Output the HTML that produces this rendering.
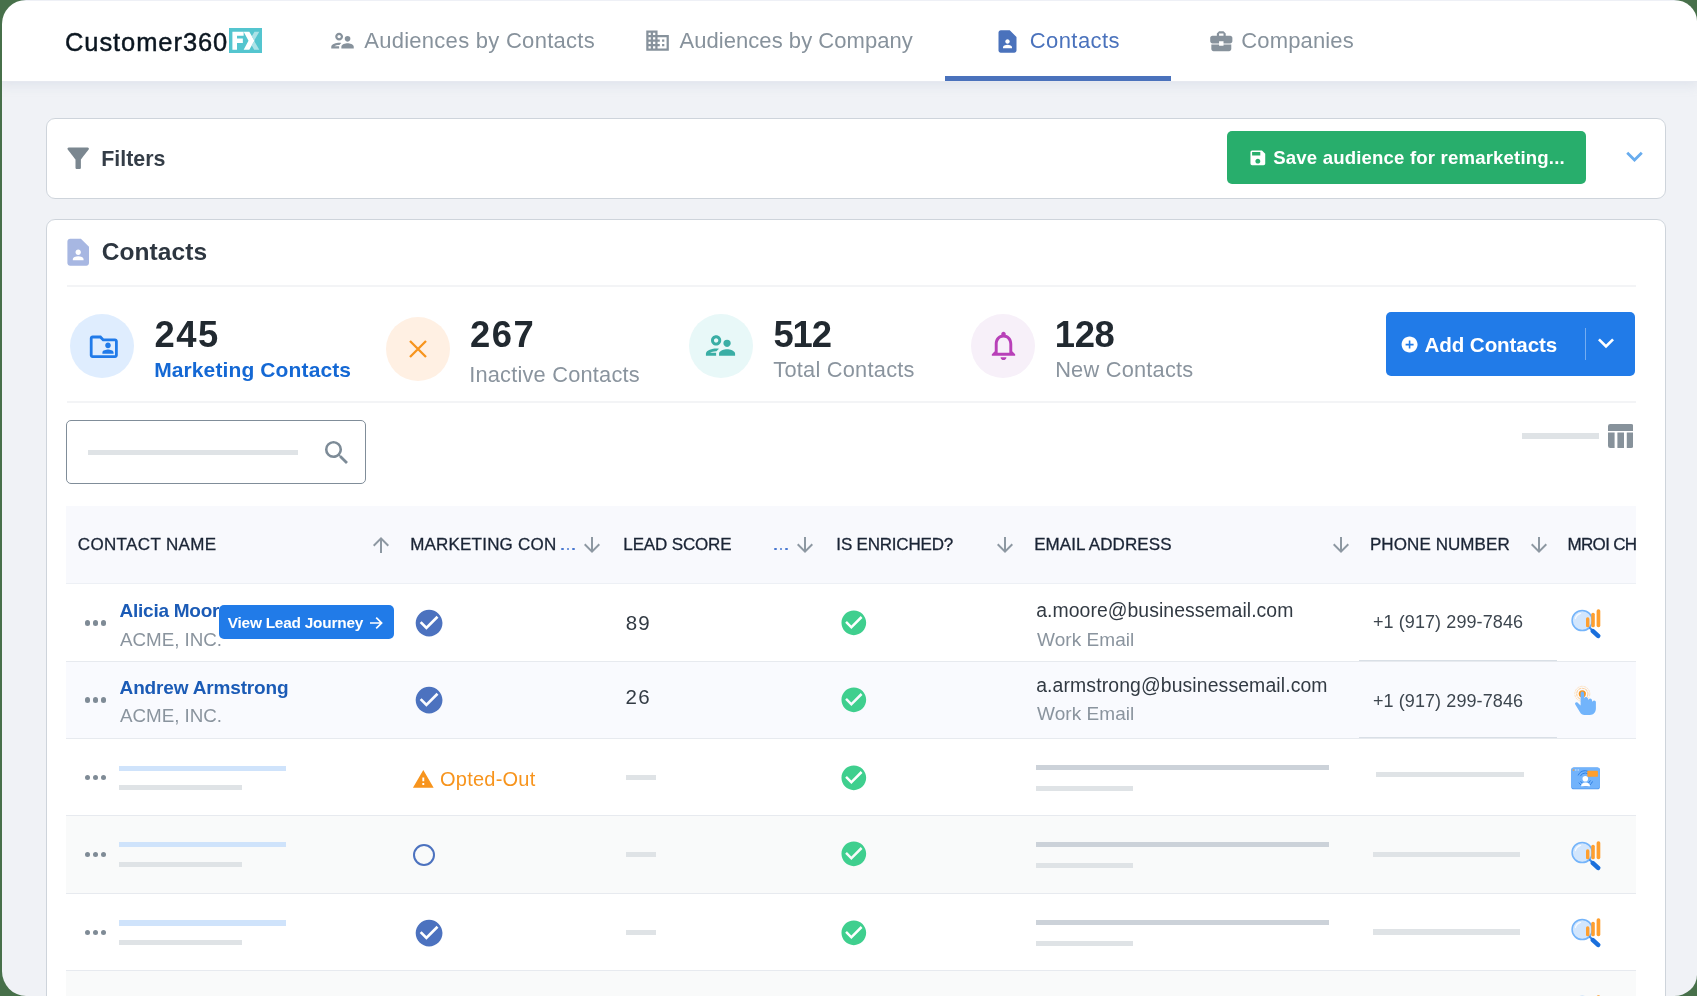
<!DOCTYPE html>
<html>
<head>
<meta charset="utf-8">
<title>Customer360FX - Contacts</title>
<style>
*{box-sizing:border-box;margin:0;padding:0}
html,body{width:1697px;height:996px;overflow:hidden;background:#f0f2f6;font-family:"Liberation Sans",sans-serif}
#app{position:absolute;left:0;top:0;width:1697px;height:996px;overflow:hidden;will-change:transform}
.a{position:absolute;display:block}
.t{position:absolute;white-space:nowrap;line-height:1}
</style>
</head>
<body>
<div id="app">
<div class="a" style="left:0.00px;top:0.00px;width:1697.00px;height:80.50px;background:#fff;box-shadow:0 1px 0 #e6e9f0,0 2px 12px 1px rgba(150,162,190,.22);"></div>
<div class="a" style="left:0.00px;top:0.00px;width:1697.00px;height:1.00px;background:#eef0f6;"></div>
<div class="t" style="left:65.02px;top:30px;font-size:25.5px;color:#0b1620;letter-spacing:0.917px;-webkit-text-stroke:.45px #0b1620;">Customer360</div>
<div class="a" style="left:229.40px;top:28.20px;width:32.60px;height:24.60px;background:#54c5cf;"></div>
<svg class="a" style="left:229.4px;top:28.2px" width="32.6" height="24.6" viewBox="0 0 32.6 24.6"><path d="M3.4 3.8h11.25v4H8v2.8h5.85v4.3H8v6.8H3.4z" fill="#fff"/><path d="M14.65 3.8h5.65l5.2 8.85-5.2 9.05h-5.65l4.85-9.05z" fill="#fff"/><path d="M25.5 3.8h4.8l-5.1 8.6-2.4-4.2zM25.2 13l5.1 8.700h-5.1l-2.600-4.400z" fill="#ace2e7"/></svg>
<svg class="a" style="left:328.70px;top:26.60px;" width="27" height="27" viewBox="0 0 24 24"><path fill="#87929c" d="M9 12c1.93 0 3.5-1.57 3.5-3.5S10.93 5 9 5 5.5 6.57 5.5 8.5 7.07 12 9 12zm0-5c.83 0 1.5.67 1.5 1.5S9.83 10 9 10s-1.5-.67-1.5-1.5S8.17 7 9 7zm.05 10H4.77c.99-.5 2.7-1 4.23-1 .11 0 .23.01.34.01.34-.73.93-1.33 1.64-1.81-.73-.13-1.42-.2-1.98-.2-2.34 0-7 1.17-7 3.5V19h7v-1.5c0-.17.02-.34.05-.5zm7.45-2.5c-1.84 0-5.5 1.01-5.5 3V19h11v-1.5c0-1.99-3.66-3-5.5-3zm1.21-1.82c.76-.43 1.29-1.24 1.29-2.18a2.5 2.5 0 0 0-5 0c0 .94.53 1.75 1.29 2.18.36.2.77.32 1.21.32s.85-.12 1.21-.32z"/></svg>
<div class="t" style="left:364.20px;top:30px;font-size:22px;color:#87929c;letter-spacing:0.275px;">Audiences by Contacts</div>
<svg class="a" style="left:644.00px;top:27.20px;" width="27.1" height="27.1" viewBox="0 0 24 24"><path fill="#87929c" d="M12 7V3H2v18h20V7H12zM6 19H4v-2h2v2zm0-4H4v-2h2v2zm0-4H4V9h2v2zm0-4H4V5h2v2zm4 12H8v-2h2v2zm0-4H8v-2h2v2zm0-4H8V9h2v2zm0-4H8V5h2v2zm10 12h-8v-2h2v-2h-2v-2h2v-2h-2V9h8v10zm-2-8h-2v2h2v-2zm0 4h-2v2h2v-2z"/></svg>
<div class="t" style="left:679.50px;top:30px;font-size:22px;color:#87929c;letter-spacing:0.052px;">Audiences by Company</div>
<svg class="a" style="left:994.20px;top:27.50px;" width="27" height="27" viewBox="0 0 24 24"><path fill="#4a72bc" d="M14 2H6c-1.1 0-2 .9-2 2v16c0 1.1.9 2 2 2h12c1.1 0 2-.9 2-2V8l-6-6zm-2 8c1.1 0 2 .9 2 2s-.9 2-2 2-2-.9-2-2 .9-2 2-2zm4 8H8v-.57c0-.81.48-1.53 1.22-1.85a6.95 6.95 0 0 1 5.56 0A2.01 2.01 0 0 1 16 17.43V18z"/></svg>
<div class="t" style="left:1029.70px;top:30px;font-size:22px;color:#4a72bc;letter-spacing:0.440px;">Contacts</div>
<svg class="a" style="left:1207.50px;top:27.70px;" width="26.6" height="26.6" viewBox="0 0 24 24"><path fill="#87929c" d="M10 16v-1H3.01L3 19c0 1.11.89 2 2 2h14c1.11 0 2-.89 2-2v-4h-7v1h-4zm10-9h-4.01V5l-2-2h-4l-2 2v2H4c-1.1 0-2 .9-2 2v3c0 1.11.89 2 2 2h6v-2h4v2h6c1.1 0 2-.9 2-2V9c0-1.1-.9-2-2-2zm-6 0h-4V5h4v2z"/></svg>
<div class="t" style="left:1241.30px;top:30px;font-size:22px;color:#87929c;letter-spacing:0.144px;">Companies</div>
<div class="a" style="left:945.00px;top:76.00px;width:225.50px;height:4.60px;background:#4a72bc;"></div>
<div class="a" style="left:46.00px;top:117.50px;width:1620.00px;height:81.00px;background:#fff;border:1.3px solid #ced4db;border-radius:9px;"></div>
<svg class="a" style="left:61.60px;top:141.70px;" width="32.4" height="32.4" viewBox="0 0 24 24"><path fill="#7b8790" d="M4.25 5.61C6.27 8.2 10 13 10 13v6c0 .55.45 1 1 1h2c.55 0 1-.45 1-1v-6s3.72-4.8 5.74-7.39A.998.998 0 0 0 18.95 4H5.04c-.83 0-1.3.95-.79 1.61z"/></svg>
<div class="t" style="left:101.31px;top:149px;font-size:21.4px;color:#343d47;font-weight:bold;letter-spacing:-0.010px;">Filters</div>
<div class="a" style="left:1227.00px;top:131.40px;width:359.00px;height:53.00px;background:#28ae6c;border-radius:5px;"></div>
<svg class="a" style="left:1248.10px;top:148.40px;" width="19.7" height="19.7" viewBox="0 0 24 24"><path fill="#fff" d="M17 3H5a2 2 0 0 0-2 2v14a2 2 0 0 0 2 2h14c1.1 0 2-.9 2-2V7l-4-4zm-5 16c-1.66 0-3-1.34-3-3s1.34-3 3-3 3 1.34 3 3-1.34 3-3 3zm3-10H5V5h10v4z"/></svg>
<div class="t" style="left:1273.24px;top:149px;font-size:18.6px;color:#fff;font-weight:bold;letter-spacing:0.168px;">Save audience for remarketing...</div>
<svg class="a" style="left:1617.50px;top:140.30px;" width="33" height="33" viewBox="0 0 24 24"><path fill="#68acee" d="M16.59 8.59L12 13.17 7.41 8.59 6 10l6 6 6-6z"/></svg>
<div class="a" style="left:46.00px;top:219.30px;width:1620.00px;height:800.00px;background:#fff;border:1.3px solid #ced4db;border-radius:9px;"></div>
<svg class="a" style="left:61.60px;top:236.00px;" width="32.4" height="32.4" viewBox="0 0 24 24"><path fill="#a7b7e2" d="M14 2H6c-1.1 0-2 .9-2 2v16c0 1.1.9 2 2 2h12c1.1 0 2-.9 2-2V8l-6-6zm-2 8c1.1 0 2 .9 2 2s-.9 2-2 2-2-.9-2-2 .9-2 2-2zm4 8H8v-.57c0-.81.48-1.53 1.22-1.85a6.95 6.95 0 0 1 5.56 0A2.01 2.01 0 0 1 16 17.43V18z"/></svg>
<div class="t" style="left:101.72px;top:240px;font-size:24.5px;color:#2d3640;font-weight:bold;letter-spacing:0.086px;">Contacts</div>
<div class="a" style="left:67.00px;top:285.00px;width:1569.00px;height:2.00px;background:#f3f4f6;"></div>
<div class="a" style="left:67.00px;top:401.00px;width:1569.00px;height:2.00px;background:#f3f4f6;"></div>
<div class="a" style="left:69.80px;top:313.80px;width:64.00px;height:64.00px;background:#dfedfe;border-radius:50%;"></div>
<div class="t" style="left:154.41px;top:317px;font-size:36.4px;color:#212930;font-weight:bold;letter-spacing:1.598px;">245</div>
<div class="t" style="left:154.13px;top:359px;font-size:21px;color:#1468d4;font-weight:bold;letter-spacing:0.119px;">Marketing Contacts</div>
<svg class="a" style="left:87.20px;top:329.80px;" width="33.6" height="33.6" viewBox="0 0 24 24"><path fill="#217be9" d="M20 6h-8l-2-2H4c-1.1 0-1.99.9-1.99 2L2 18c0 1.1.9 2 2 2h16c1.1 0 2-.9 2-2V8c0-1.1-.9-2-2-2zm0 12H4V6h5.17l2 2H20v10zm-5-5c1.1 0 2-.9 2-2s-.9-2-2-2-2 .9-2 2 .9 2 2 2zm-4 4h8v-1c0-1.33-2.67-2-4-2s-4 .67-4 2v1z"/></svg>
<div class="a" style="left:386.00px;top:317.30px;width:64.00px;height:64.00px;background:#fff0e3;border-radius:50%;"></div>
<div class="t" style="left:470.01px;top:317px;font-size:36.4px;color:#212930;font-weight:bold;letter-spacing:1.571px;">267</div>
<div class="t" style="left:469.14px;top:364px;font-size:21.8px;color:#8a949e;letter-spacing:0.214px;">Inactive Contacts</div>
<svg class="a" style="left:408.9px;top:340.3px" width="18" height="18" viewBox="0 0 18 18"><path d="M1 1l16 16M17 1L1 17" stroke="#f7941d" stroke-width="2.3" fill="none"/></svg>
<div class="a" style="left:688.80px;top:313.80px;width:64.00px;height:64.00px;background:#e8f8f8;border-radius:50%;"></div>
<div class="t" style="left:773.51px;top:317px;font-size:36.4px;color:#212930;font-weight:bold;letter-spacing:-1.120px;">512</div>
<div class="t" style="left:773.26px;top:359px;font-size:21.8px;color:#8a949e;letter-spacing:0.238px;">Total Contacts</div>
<svg class="a" style="left:703.00px;top:328.10px;" width="35" height="35" viewBox="0 0 24 24"><path fill="#3aaea5" d="M9 12c1.93 0 3.5-1.57 3.5-3.5S10.93 5 9 5 5.5 6.57 5.5 8.5 7.07 12 9 12zm0-5c.83 0 1.5.67 1.5 1.5S9.83 10 9 10s-1.5-.67-1.5-1.5S8.17 7 9 7zm.05 10H4.77c.99-.5 2.7-1 4.23-1 .11 0 .23.01.34.01.34-.73.93-1.33 1.64-1.81-.73-.13-1.42-.2-1.98-.2-2.34 0-7 1.17-7 3.5V19h7v-1.5c0-.17.02-.34.05-.5zm7.45-2.5c-1.84 0-5.5 1.01-5.5 3V19h11v-1.5c0-1.99-3.66-3-5.5-3zm1.21-1.82c.76-.43 1.29-1.24 1.29-2.18a2.5 2.5 0 0 0-5 0c0 .94.53 1.75 1.29 2.18.36.2.77.32 1.21.32s.85-.12 1.21-.32z"/></svg>
<div class="a" style="left:971.10px;top:313.80px;width:64.00px;height:64.00px;background:#f7f0f9;border-radius:50%;"></div>
<div class="t" style="left:1054.72px;top:317px;font-size:36.4px;color:#212930;font-weight:bold;letter-spacing:-0.306px;">128</div>
<div class="t" style="left:1055.16px;top:359px;font-size:21.8px;color:#8a949e;letter-spacing:0.218px;">New Contacts</div>
<svg class="a" style="left:986.00px;top:328.20px;" width="35" height="35" viewBox="0 0 24 24"><path fill="#b840b8" d="M12 22c1.1 0 2-.9 2-2h-4c0 1.1.9 2 2 2zm6-6v-5c0-3.07-1.63-5.64-4.5-6.32V4c0-.83-.67-1.5-1.5-1.5s-1.5.67-1.5 1.5v.68C7.64 5.36 6 7.92 6 11v5l-2 2v1h16v-1l-2-2zm-2 1H8v-6c0-2.48 1.51-4.5 4-4.5s4 2.02 4 4.5v6z"/></svg>
<div class="a" style="left:1386.00px;top:312.00px;width:249.00px;height:64.00px;background:#217be8;border-radius:5px;"></div>
<svg class="a" style="left:1400.40px;top:334.50px;" width="19.2" height="19.2" viewBox="0 0 24 24"><path fill="#fff" d="M12 2C6.48 2 2 6.48 2 12s4.48 10 10 10 10-4.48 10-10S17.52 2 12 2zm5 11h-4v4h-2v-4H7v-2h4V7h2v4h4v2z"/></svg>
<div class="t" style="left:1424.58px;top:335px;font-size:20.6px;color:#fff;font-weight:bold;letter-spacing:-0.115px;">Add Contacts</div>
<div class="a" style="left:1584.50px;top:328.00px;width:1.20px;height:31.60px;background:rgba(255,255,255,.38);"></div>
<svg class="a" style="left:1590.00px;top:327.30px;" width="32" height="32" viewBox="0 0 24 24"><path fill="#fff" d="M16.59 8.59L12 13.17 7.41 8.59 6 10l6 6 6-6z"/></svg>
<div class="a" style="left:66.00px;top:420.00px;width:300.00px;height:64.00px;background:#fff;border:1.5px solid #808d99;border-radius:5px;"></div>
<div class="a" style="left:88.00px;top:449.70px;width:210.40px;height:5.20px;background:#dfe3e6;"></div>
<svg class="a" style="left:320.50px;top:437.00px;" width="31.6" height="31.6" viewBox="0 0 24 24"><path fill="#7d8b97" d="M15.5 14h-.79l-.28-.27A6.471 6.471 0 0 0 16 9.5 6.5 6.5 0 1 0 9.5 16c1.61 0 3.09-.59 4.23-1.57l.27.28v.79l5 4.99L20.49 19l-4.99-5zm-6 0C7.01 14 5 11.99 5 9.5S7.01 5 9.5 5 14 7.01 14 9.5 11.99 14 9.5 14z"/></svg>
<div class="a" style="left:1521.80px;top:433.10px;width:76.80px;height:5.50px;background:#dfe3e6;"></div>
<svg class="a" style="left:1608px;top:424px" width="25.4" height="24" viewBox="0 0 25.4 24"><path fill="#87929b" d="M2.2 0h21a2.2 2.2 0 0 1 2.2 2.2V6.9H0V2.2A2.2 2.2 0 0 1 2.2 0zM0 8.6h6.6V24H2.2A2.2 2.2 0 0 1 0 21.8zM9.4 8.6h6.6V24H9.4zM18.8 8.6h6.6v13.2a2.2 2.2 0 0 1-2.2 2.2h-4.4z"/></svg>
<div class="a" style="left:66.00px;top:506.40px;width:1570.00px;height:77.80px;background:#f8f9fd;border-bottom:1.3px solid #edf0f5;"></div>
<div class="t" style="left:77.75px;top:536px;font-size:17px;color:#1a2435;letter-spacing:0.359px;-webkit-text-stroke:.3px #1a2435;">CONTACT NAME</div>
<svg class="a" style="left:369.00px;top:533.20px;" width="24" height="24" viewBox="0 0 24 24"><path fill="#8d98a2" d="M4 12l1.41 1.41L11 7.83V20h2V7.83l5.58 5.59L20 12l-8-8-8 8z"/></svg>
<div class="t" style="left:410.14px;top:536px;font-size:17px;color:#1a2435;letter-spacing:0.206px;-webkit-text-stroke:.3px #1a2435;">MARKETING CON</div>
<svg class="a" style="left:580.00px;top:533.00px;" width="24" height="24" viewBox="0 0 24 24"><path fill="#8d98a2" d="M20 12l-1.41-1.41L13 16.17V4h-2v12.17l-5.58-5.59L4 12l8 8 8-8z"/></svg>
<div class="t" style="left:623.34px;top:536px;font-size:17px;color:#1a2435;letter-spacing:-0.147px;-webkit-text-stroke:.3px #1a2435;">LEAD SCORE</div>
<svg class="a" style="left:793.40px;top:533.00px;" width="24" height="24" viewBox="0 0 24 24"><path fill="#8d98a2" d="M20 12l-1.41-1.41L13 16.17V4h-2v12.17l-5.58-5.59L4 12l8 8 8-8z"/></svg>
<div class="t" style="left:836.37px;top:536px;font-size:17px;color:#1a2435;letter-spacing:-0.198px;-webkit-text-stroke:.3px #1a2435;">IS ENRICHED?</div>
<svg class="a" style="left:993.30px;top:533.00px;" width="24" height="24" viewBox="0 0 24 24"><path fill="#8d98a2" d="M20 12l-1.41-1.41L13 16.17V4h-2v12.17l-5.58-5.59L4 12l8 8 8-8z"/></svg>
<div class="t" style="left:1034.14px;top:536px;font-size:17px;color:#1a2435;letter-spacing:0.083px;-webkit-text-stroke:.3px #1a2435;">EMAIL ADDRESS</div>
<svg class="a" style="left:1328.80px;top:533.00px;" width="24" height="24" viewBox="0 0 24 24"><path fill="#8d98a2" d="M20 12l-1.41-1.41L13 16.17V4h-2v12.17l-5.58-5.59L4 12l8 8 8-8z"/></svg>
<div class="t" style="left:1369.94px;top:536px;font-size:17px;color:#1a2435;letter-spacing:0.085px;-webkit-text-stroke:.3px #1a2435;">PHONE NUMBER</div>
<svg class="a" style="left:1526.80px;top:533.00px;" width="24" height="24" viewBox="0 0 24 24"><path fill="#8d98a2" d="M20 12l-1.41-1.41L13 16.17V4h-2v12.17l-5.58-5.59L4 12l8 8 8-8z"/></svg>
<div class="t" style="left:1567.54px;top:536px;font-size:17px;color:#1a2435;letter-spacing:-0.683px;-webkit-text-stroke:.3px #1a2435;width:68.3px;overflow:hidden;">MROI CHANNEL</div>
<div class="a" style="left:561.20px;top:547.60px;width:2.60px;height:2.60px;background:#4a78d0;border-radius:50%;"></div>
<div class="a" style="left:566.70px;top:547.60px;width:2.60px;height:2.60px;background:#4a78d0;border-radius:50%;"></div>
<div class="a" style="left:572.20px;top:547.60px;width:2.60px;height:2.60px;background:#4a78d0;border-radius:50%;"></div>
<div class="a" style="left:774.20px;top:547.60px;width:2.60px;height:2.60px;background:#4a78d0;border-radius:50%;"></div>
<div class="a" style="left:779.70px;top:547.60px;width:2.60px;height:2.60px;background:#4a78d0;border-radius:50%;"></div>
<div class="a" style="left:785.20px;top:547.60px;width:2.60px;height:2.60px;background:#4a78d0;border-radius:50%;"></div>
<div class="a" style="left:66.00px;top:584.20px;width:1570.00px;height:77.35px;background:#fff;border-bottom:1.3px solid #e7eaef;"></div>
<div class="a" style="left:66.00px;top:661.55px;width:1570.00px;height:77.30px;background:#f9fafe;border-bottom:1.3px solid #e7eaef;"></div>
<div class="a" style="left:66.00px;top:738.85px;width:1570.00px;height:77.20px;background:#fff;border-bottom:1.3px solid #e7eaef;"></div>
<div class="a" style="left:66.00px;top:816.05px;width:1570.00px;height:77.70px;background:#f9fafa;border-bottom:1.3px solid #e7eaef;"></div>
<div class="a" style="left:66.00px;top:893.75px;width:1570.00px;height:77.20px;background:#fff;border-bottom:1.3px solid #e7eaef;"></div>
<div class="a" style="left:66.00px;top:970.95px;width:1570.00px;height:40.00px;background:#f9fafa;border-bottom:1.3px solid #e7eaef;"></div>
<div class="a" style="left:1359.00px;top:659.90px;width:198.00px;height:1.30px;background:#d9dfe6;"></div>
<div class="a" style="left:1359.00px;top:737.20px;width:198.00px;height:1.30px;background:#d9dfe6;"></div>
<div class="a" style="left:84.55px;top:620.45px;width:5.50px;height:5.50px;background:#7f8b96;border-radius:50%;"></div>
<div class="a" style="left:92.65px;top:620.45px;width:5.50px;height:5.50px;background:#7f8b96;border-radius:50%;"></div>
<div class="a" style="left:100.65px;top:620.45px;width:5.50px;height:5.50px;background:#7f8b96;border-radius:50%;"></div>
<div class="a" style="left:84.55px;top:697.25px;width:5.50px;height:5.50px;background:#7f8b96;border-radius:50%;"></div>
<div class="a" style="left:92.65px;top:697.25px;width:5.50px;height:5.50px;background:#7f8b96;border-radius:50%;"></div>
<div class="a" style="left:100.65px;top:697.25px;width:5.50px;height:5.50px;background:#7f8b96;border-radius:50%;"></div>
<div class="a" style="left:84.55px;top:774.95px;width:5.50px;height:5.50px;background:#7f8b96;border-radius:50%;"></div>
<div class="a" style="left:92.65px;top:774.95px;width:5.50px;height:5.50px;background:#7f8b96;border-radius:50%;"></div>
<div class="a" style="left:100.65px;top:774.95px;width:5.50px;height:5.50px;background:#7f8b96;border-radius:50%;"></div>
<div class="a" style="left:84.55px;top:851.55px;width:5.50px;height:5.50px;background:#7f8b96;border-radius:50%;"></div>
<div class="a" style="left:92.65px;top:851.55px;width:5.50px;height:5.50px;background:#7f8b96;border-radius:50%;"></div>
<div class="a" style="left:100.65px;top:851.55px;width:5.50px;height:5.50px;background:#7f8b96;border-radius:50%;"></div>
<div class="a" style="left:84.55px;top:929.95px;width:5.50px;height:5.50px;background:#7f8b96;border-radius:50%;"></div>
<div class="a" style="left:92.65px;top:929.95px;width:5.50px;height:5.50px;background:#7f8b96;border-radius:50%;"></div>
<div class="a" style="left:100.65px;top:929.95px;width:5.50px;height:5.50px;background:#7f8b96;border-radius:50%;"></div>
<svg class="a" style="left:839.18px;top:608.38px;" width="29.64" height="29.64" viewBox="0 0 24 24"><path fill="#3fcf8e" d="M12 2C6.48 2 2 6.48 2 12s4.48 10 10 10 10-4.48 10-10S17.52 2 12 2zm-2 15l-5-5 1.41-1.41L10 14.17l7.59-7.59L19 8l-9 9z"/></svg>
<svg class="a" style="left:839.18px;top:685.18px;" width="29.64" height="29.64" viewBox="0 0 24 24"><path fill="#3fcf8e" d="M12 2C6.48 2 2 6.48 2 12s4.48 10 10 10 10-4.48 10-10S17.52 2 12 2zm-2 15l-5-5 1.41-1.41L10 14.17l7.59-7.59L19 8l-9 9z"/></svg>
<svg class="a" style="left:839.18px;top:762.88px;" width="29.64" height="29.64" viewBox="0 0 24 24"><path fill="#3fcf8e" d="M12 2C6.48 2 2 6.48 2 12s4.48 10 10 10 10-4.48 10-10S17.52 2 12 2zm-2 15l-5-5 1.41-1.41L10 14.17l7.59-7.59L19 8l-9 9z"/></svg>
<svg class="a" style="left:839.18px;top:839.48px;" width="29.64" height="29.64" viewBox="0 0 24 24"><path fill="#3fcf8e" d="M12 2C6.48 2 2 6.48 2 12s4.48 10 10 10 10-4.48 10-10S17.52 2 12 2zm-2 15l-5-5 1.41-1.41L10 14.17l7.59-7.59L19 8l-9 9z"/></svg>
<svg class="a" style="left:839.18px;top:917.88px;" width="29.64" height="29.64" viewBox="0 0 24 24"><path fill="#3fcf8e" d="M12 2C6.48 2 2 6.48 2 12s4.48 10 10 10 10-4.48 10-10S17.52 2 12 2zm-2 15l-5-5 1.41-1.41L10 14.17l7.59-7.59L19 8l-9 9z"/></svg>
<svg class="a" style="left:412.52px;top:607.22px;" width="32.16" height="32.16" viewBox="0 0 24 24"><path fill="#4c72bf" d="M12 2C6.48 2 2 6.48 2 12s4.48 10 10 10 10-4.48 10-10S17.52 2 12 2zm-2 15l-5-5 1.41-1.41L10 14.17l7.59-7.59L19 8l-9 9z"/></svg>
<svg class="a" style="left:412.52px;top:683.92px;" width="32.16" height="32.16" viewBox="0 0 24 24"><path fill="#4c72bf" d="M12 2C6.48 2 2 6.48 2 12s4.48 10 10 10 10-4.48 10-10S17.52 2 12 2zm-2 15l-5-5 1.41-1.41L10 14.17l7.59-7.59L19 8l-9 9z"/></svg>
<svg class="a" style="left:412.52px;top:916.62px;" width="32.16" height="32.16" viewBox="0 0 24 24"><path fill="#4c72bf" d="M12 2C6.48 2 2 6.48 2 12s4.48 10 10 10 10-4.48 10-10S17.52 2 12 2zm-2 15l-5-5 1.41-1.41L10 14.17l7.59-7.59L19 8l-9 9z"/></svg>
<div class="t" style="left:119.62px;top:601px;font-size:19px;color:#1b5bb6;font-weight:bold;letter-spacing:-0.265px;">Alicia Moore</div>
<div class="t" style="left:120.10px;top:631px;font-size:18.8px;color:#8a949e;letter-spacing:-0.053px;">ACME, INC.</div>
<div class="a" style="left:219.10px;top:605.00px;width:175.00px;height:34.20px;background:#217be8;border-radius:5px;"></div>
<div class="t" style="left:227.72px;top:615px;font-size:15.4px;color:#fff;font-weight:bold;letter-spacing:-0.221px;">View Lead Journey</div>
<svg class="a" style="left:368.8px;top:615.6px" width="14" height="14" viewBox="0 0 14 14"><path d="M1 7h11.4M7.2 1.6L12.6 7l-5.4 5.4" stroke="#fff" stroke-width="1.7" fill="none"/></svg>
<div class="t" style="left:625.68px;top:613px;font-size:20.5px;color:#323a43;letter-spacing:1.188px;">89</div>
<div class="t" style="left:1036.22px;top:601px;font-size:19.4px;color:#323a43;letter-spacing:0.060px;">a.moore@businessemail.com</div>
<div class="t" style="left:1037.00px;top:630px;font-size:19px;color:#8a949e;letter-spacing:0.059px;">Work Email</div>
<div class="t" style="left:1372.89px;top:613px;font-size:18px;color:#3d464f;letter-spacing:0.096px;">+1 (917) 299-7846</div>
<div class="t" style="left:119.62px;top:678px;font-size:19px;color:#1b5bb6;font-weight:bold;letter-spacing:-0.158px;">Andrew Armstrong</div>
<div class="t" style="left:120.10px;top:707px;font-size:18.8px;color:#8a949e;letter-spacing:-0.053px;">ACME, INC.</div>
<div class="t" style="left:625.48px;top:687px;font-size:20.5px;color:#323a43;letter-spacing:1.290px;">26</div>
<div class="t" style="left:1036.22px;top:676px;font-size:19.4px;color:#323a43;letter-spacing:0.116px;">a.armstrong@businessemail.com</div>
<div class="t" style="left:1037.00px;top:704px;font-size:19px;color:#8a949e;letter-spacing:0.059px;">Work Email</div>
<div class="t" style="left:1372.89px;top:692px;font-size:18px;color:#3d464f;letter-spacing:0.096px;">+1 (917) 299-7846</div>
<div class="a" style="left:119.20px;top:765.60px;width:167.10px;height:5.30px;background:#cfe3fb;"></div>
<div class="a" style="left:119.20px;top:785.30px;width:123.00px;height:5.00px;background:#dfe3e6;"></div>
<div class="a" style="left:625.70px;top:775.10px;width:30.20px;height:5.20px;background:#dfe3e6;"></div>
<div class="a" style="left:1036.10px;top:764.70px;width:293.30px;height:5.30px;background:#ccd2d9;"></div>
<div class="a" style="left:1036.10px;top:786.10px;width:97.40px;height:5.00px;background:#dfe3e6;"></div>
<div class="a" style="left:1375.80px;top:772.10px;width:147.90px;height:5.30px;background:#dfe3e6;"></div>
<div class="a" style="left:119.20px;top:842.20px;width:167.10px;height:5.30px;background:#cfe3fb;"></div>
<div class="a" style="left:119.20px;top:861.80px;width:123.00px;height:5.00px;background:#dfe3e6;"></div>
<div class="a" style="left:625.70px;top:852.00px;width:30.20px;height:5.20px;background:#dfe3e6;"></div>
<div class="a" style="left:1036.10px;top:841.50px;width:293.30px;height:5.30px;background:#ccd2d9;"></div>
<div class="a" style="left:1036.10px;top:862.90px;width:97.40px;height:5.00px;background:#dfe3e6;"></div>
<div class="a" style="left:1372.50px;top:852.20px;width:147.90px;height:5.30px;background:#dfe3e6;"></div>
<div class="a" style="left:119.20px;top:920.30px;width:167.10px;height:5.30px;background:#cfe3fb;"></div>
<div class="a" style="left:119.20px;top:939.90px;width:123.00px;height:5.00px;background:#dfe3e6;"></div>
<div class="a" style="left:625.70px;top:930.10px;width:30.20px;height:5.20px;background:#dfe3e6;"></div>
<div class="a" style="left:1036.10px;top:919.60px;width:293.30px;height:5.30px;background:#ccd2d9;"></div>
<div class="a" style="left:1036.10px;top:940.90px;width:97.40px;height:5.00px;background:#dfe3e6;"></div>
<div class="a" style="left:1372.50px;top:929.40px;width:147.90px;height:5.30px;background:#dfe3e6;"></div>
<svg class="a" style="left:412.40px;top:767.50px;" width="22.6" height="22.6" viewBox="0 0 24 24"><path fill="#f7941d" d="M1 21h22L12 2 1 21zm12-3h-2v-2h2v2zm0-4h-2v-4h2v4z"/></svg>
<div class="t" style="left:440.00px;top:769px;font-size:20px;color:#f7941d;letter-spacing:0.237px;">Opted-Out</div>
<div class="a" style="left:412.60px;top:843.80px;width:22.40px;height:22.40px;background:transparent;border:2.1px solid #4c72bf;border-radius:50%;"></div>
<svg class="a" style="left:1570.6px;top:608.8px" width="30" height="30" viewBox="0 0 30 30"><circle cx="11.2" cy="11.5" r="10.1" fill="#d2e6fd" stroke="#74b4fa" stroke-width="1.5"/><path d="M4.4 9.600a7.200 7.200 0 0 1 5.200-5.200" stroke="#fff" stroke-width="1.2" fill="none" stroke-linecap="round" opacity=".85"/><path d="M19 19l3 3" stroke="#3f8ce8" stroke-width="2.2" stroke-linecap="round"/><path d="M21.9 22.100l5.200 4.800" stroke="#1a6fdc" stroke-width="4.6" stroke-linecap="round"/><rect x="15" y="8.300" width="3.400" height="10" rx="1.600" fill="#ff9f2e"/><rect x="20.300" y="3.700" width="3.500" height="14.600" rx="1.650" fill="#ff9f2e"/><rect x="25.600" y=".2" width="3.700" height="18.100" rx="1.750" fill="#ff9f2e"/></svg>
<svg class="a" style="left:1570.6px;top:840.5px" width="30" height="30" viewBox="0 0 30 30"><circle cx="11.2" cy="11.5" r="10.1" fill="#d2e6fd" stroke="#74b4fa" stroke-width="1.5"/><path d="M4.4 9.600a7.200 7.200 0 0 1 5.200-5.200" stroke="#fff" stroke-width="1.2" fill="none" stroke-linecap="round" opacity=".85"/><path d="M19 19l3 3" stroke="#3f8ce8" stroke-width="2.2" stroke-linecap="round"/><path d="M21.9 22.100l5.200 4.800" stroke="#1a6fdc" stroke-width="4.6" stroke-linecap="round"/><rect x="15" y="8.300" width="3.400" height="10" rx="1.600" fill="#ff9f2e"/><rect x="20.300" y="3.700" width="3.500" height="14.600" rx="1.650" fill="#ff9f2e"/><rect x="25.600" y=".2" width="3.700" height="18.100" rx="1.750" fill="#ff9f2e"/></svg>
<svg class="a" style="left:1570.6px;top:917.8px" width="30" height="30" viewBox="0 0 30 30"><circle cx="11.2" cy="11.5" r="10.1" fill="#d2e6fd" stroke="#74b4fa" stroke-width="1.5"/><path d="M4.4 9.600a7.200 7.200 0 0 1 5.200-5.200" stroke="#fff" stroke-width="1.2" fill="none" stroke-linecap="round" opacity=".85"/><path d="M19 19l3 3" stroke="#3f8ce8" stroke-width="2.2" stroke-linecap="round"/><path d="M21.9 22.100l5.200 4.800" stroke="#1a6fdc" stroke-width="4.6" stroke-linecap="round"/><rect x="15" y="8.300" width="3.400" height="10" rx="1.600" fill="#ff9f2e"/><rect x="20.300" y="3.700" width="3.500" height="14.600" rx="1.650" fill="#ff9f2e"/><rect x="25.600" y=".2" width="3.700" height="18.100" rx="1.750" fill="#ff9f2e"/></svg>
<svg class="a" style="left:1570.6px;top:995px" width="30" height="30" viewBox="0 0 30 30"><circle cx="11.2" cy="11.5" r="10.1" fill="#d2e6fd" stroke="#74b4fa" stroke-width="1.5"/><path d="M4.4 9.600a7.200 7.200 0 0 1 5.200-5.200" stroke="#fff" stroke-width="1.2" fill="none" stroke-linecap="round" opacity=".85"/><path d="M19 19l3 3" stroke="#3f8ce8" stroke-width="2.2" stroke-linecap="round"/><path d="M21.9 22.100l5.200 4.800" stroke="#1a6fdc" stroke-width="4.6" stroke-linecap="round"/><rect x="15" y="8.300" width="3.400" height="10" rx="1.600" fill="#ff9f2e"/><rect x="20.300" y="3.700" width="3.500" height="14.600" rx="1.650" fill="#ff9f2e"/><rect x="25.600" y=".2" width="3.700" height="18.100" rx="1.750" fill="#ff9f2e"/></svg>
<svg class="a" style="left:1572px;top:685px" width="27" height="32" viewBox="0 0 27 32"><circle cx="10.300" cy="8.800" r="7.500" fill="none" stroke="#fde2c2" stroke-width="1" stroke-dasharray="2.600 .7"/><circle cx="10.300" cy="8.800" r="5.600" fill="none" stroke="#fcd3a3" stroke-width="1.100" stroke-dasharray="3 .6"/><circle cx="10.300" cy="8.800" r="3.600" fill="#f8961f"/><path d="M8.600 8.300a1.750 1.750 0 0 1 3.500 0V13.600a1.900 1.600 0 0 1 3.800-.2l.5 1.700a1.750 1.500 0 0 1 3.500 0l.5 2a1.750 1.500 0 0 1 3.500 0V23.500c0 3.800-2.400 6.400-6 6.400H12.400c-2 0-3.300-.9-4.400-2.700L3.300 19.600c-.9-1.600.7-3.200 2.200-2.100L8.600 20.400z" fill="#72b4fb"/></svg>
<svg class="a" style="left:1570.8px;top:766.6px" width="29.2" height="23" viewBox="0 0 29.200 23"><rect x=".25" y=".45" width="28.700" height="21.900" rx="2.700" fill="#4f97ec"/><rect x=".25" y=".45" width="28.700" height="21" rx="2.700" fill="#72b3fb"/><circle cx="2.500" cy="3" r=".85" fill="#ff9f2e"/><circle cx="4.800" cy="3" r=".7" fill="#d4e7fd"/><circle cx="7.200" cy="3" r=".7" fill="#d4e7fd"/><circle cx="14.300" cy="11.500" r="7.800" fill="none" stroke="#2f7fe2" stroke-width="1" stroke-dasharray="17 7.500" stroke-dashoffset="-3"/><circle cx="14.300" cy="11.500" r="5.500" fill="none" stroke="#2f7fe2" stroke-width="1" stroke-dasharray="12 5.300" stroke-dashoffset="-2"/><rect x="16.300" y="3.700" width="10.600" height="6.100" rx=".9" fill="#ff9f2e"/><circle cx="14.300" cy="11.750" r="2.800" fill="#fff"/><path d="M10 19.300c0-2.400 1.900-3.800 4.550-3.800s4.550 1.400 4.550 3.800z" fill="#fff"/></svg>
<div class="a" style="left:2px;top:0;width:1695px;height:996px;border-radius:24px 23px 23px 24px / 24px 21px 21px 25px;box-shadow:0 0 0 60px #47704a;pointer-events:none"></div>
</div>
</body>
</html>
